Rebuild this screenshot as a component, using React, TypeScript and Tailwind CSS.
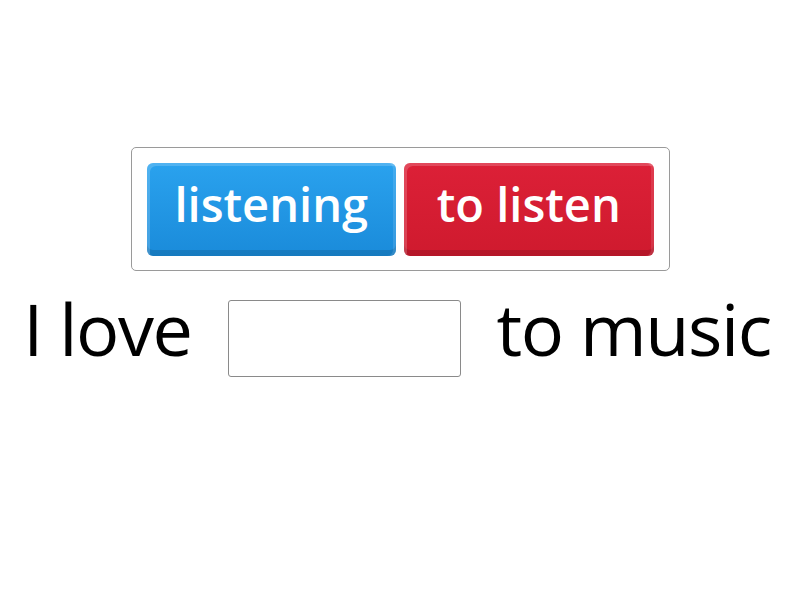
export default function App() {
  const font = { fontFamily: '"Open Sans", "Noto Sans", sans-serif' };
  return (
    <div className="w-[800px] h-[600px] bg-white flex flex-col items-center pt-[147px]" style={font}>
      {/* choices */}
      <div className="w-[539px] h-[124px] border border-[#9a9a9a] rounded-[5px] p-[15px] flex gap-2">
        <button className="flex-1 h-[93px] rounded-[6px] bg-gradient-to-b from-[#2aa2ee] to-[#1a8bda] text-white text-[47px] font-semibold leading-none shadow-[inset_3px_3px_0_rgba(255,255,255,0.18),inset_-3px_0_0_rgba(255,255,255,0.12),inset_0_-6px_0_rgba(0,0,0,0.12)] pb-[10px]">
          listening
        </button>
        <button className="flex-1 h-[93px] rounded-[6px] bg-gradient-to-b from-[#dc2037] to-[#cf1a2e] text-white text-[47px] font-semibold leading-none shadow-[inset_3px_3px_0_rgba(255,255,255,0.18),inset_-3px_0_0_rgba(255,255,255,0.12),inset_0_-6px_0_rgba(0,0,0,0.12)] pb-[10px]">
          to listen
        </button>
      </div>

      {/* sentence */}
      <div className="mt-[21px] pr-[6px] flex items-start gap-[36px] text-black text-[72px] leading-none tracking-[-1.4px]">
        <span>I love</span>
        <div className="mt-[8px] w-[233px] h-[77px] border border-[#8a8a8a] rounded-[3px] bg-white" />
        <span>to music</span>
      </div>
    </div>
  );
}
